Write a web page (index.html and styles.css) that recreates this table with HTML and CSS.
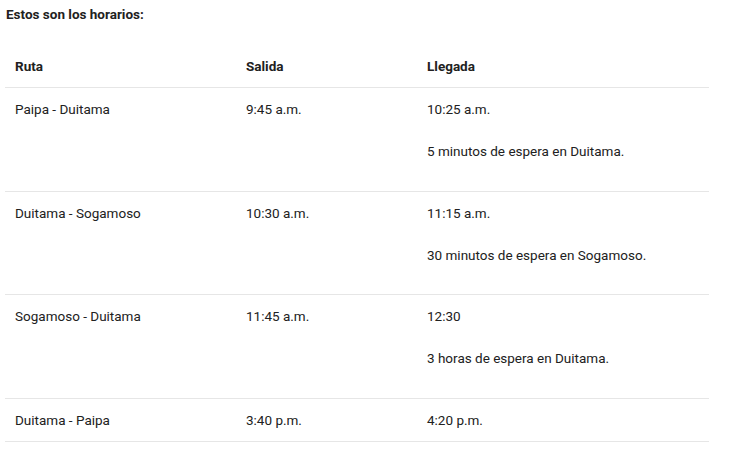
FILE: index.html
```
<!DOCTYPE html>
<html lang="es">
<head>
<meta charset="utf-8">
<link rel="stylesheet" href="styles.css">
</head>
<body>
<p class="title">Estos son los horarios:</p>
<table class="schedule">
  <colgroup>
    <col class="c1"><col class="c2"><col class="c3">
  </colgroup>
  <thead>
    <tr><th>Ruta</th><th>Salida</th><th>Llegada</th></tr>
  </thead>
  <tbody>
    <tr class="tall">
      <td>Paipa - Duitama</td>
      <td>9:45 a.m.</td>
      <td><p class="t">10:25 a.m.</p><p class="note">5 minutos de espera en Duitama.</p></td>
    </tr>
    <tr class="tall short">
      <td>Duitama - Sogamoso</td>
      <td>10:30 a.m.</td>
      <td><p class="t">11:15 a.m.</p><p class="note">30 minutos de espera en Sogamoso.</p></td>
    </tr>
    <tr class="tall">
      <td>Sogamoso - Duitama</td>
      <td>11:45 a.m.</td>
      <td><p class="t">12:30</p><p class="note">3 horas de espera en Duitama.</p></td>
    </tr>
    <tr>
      <td>Duitama - Paipa</td>
      <td>3:40 p.m.</td>
      <td>4:20 p.m.</td>
    </tr>
  </tbody>
</table>
</body>
</html>
```
FILE: styles.css
```
html, body {
  margin: 0;
  background: #ffffff;
}
body {
  padding: 4px 5px;
  font-family: Roboto, "Liberation Sans", Arial, sans-serif;
  font-size: 13.5px;
  line-height: 21px;
  color: #212121;
}
.title {
  margin: 0 0 21px 1px;
  font-weight: 700;
  line-height: 21px;
}
.schedule {
  width: 704px;
  border-collapse: collapse;
  table-layout: fixed;
}
.c1 { width: 231px; }
.c2 { width: 181px; }
.c3 { width: 292px; }
.schedule th {
  text-align: left;
  font-weight: 700;
  padding: 10px 10px 10px 10px;
  vertical-align: top;
}
.schedule td {
  padding: 11px 10px 10px 10px;
  vertical-align: top;
  border-top: 1px solid #e6e6e6;
}
.schedule tbody tr:last-child td {
  border-bottom: 1px solid #e6e6e6;
}
.schedule p {
  margin: 0;
}
.schedule .note {
  margin-top: 21px;
  margin-bottom: 19px;
}
.schedule .short .note {
  margin-bottom: 18px;
}
```
